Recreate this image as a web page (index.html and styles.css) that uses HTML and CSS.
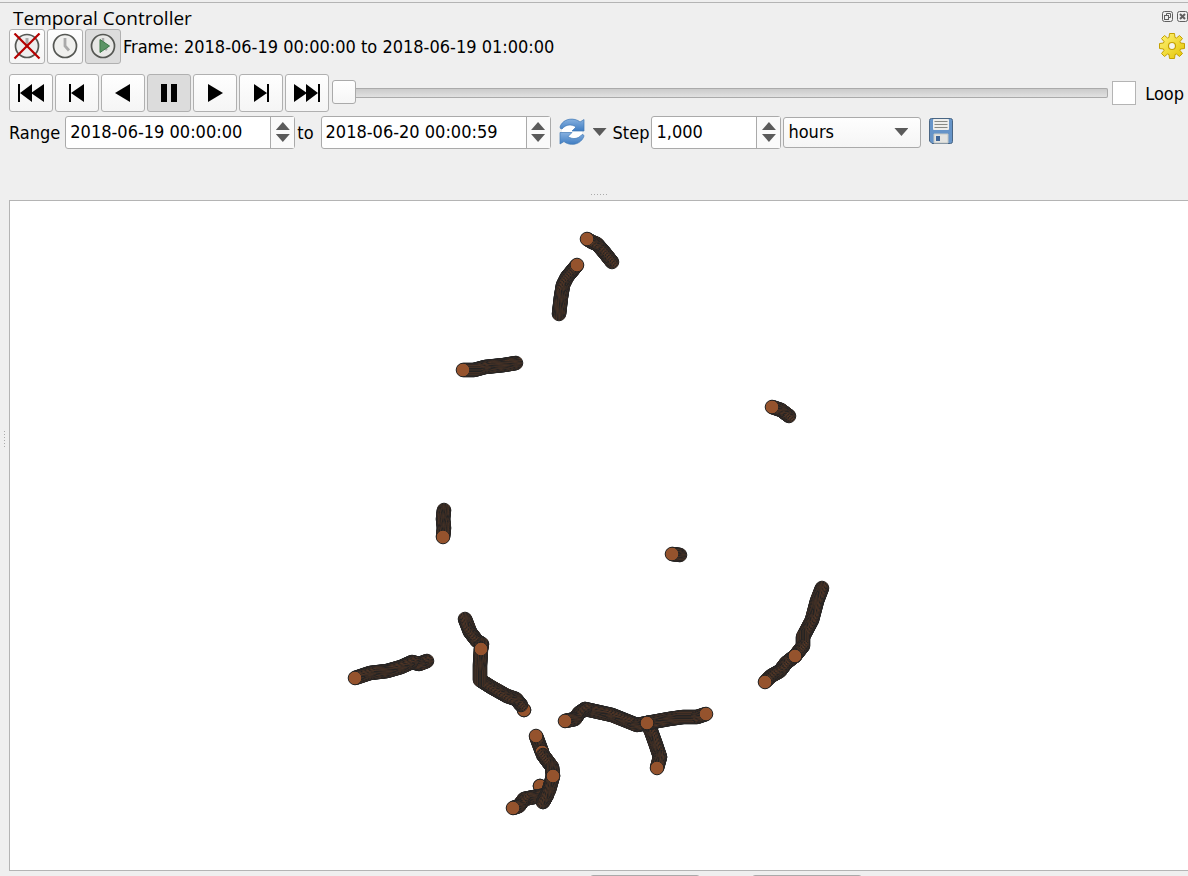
FILE: index.html
```
<!DOCTYPE html>
<html lang="en">

    <head>
        <meta charset="utf-8">
        <meta name="viewport" content="width=device-width, initial-scale=1">
        <title>Temporal Controller</title>

        <link rel="stylesheet" href="styles.css">
        <script src="tracks.js" defer></script>
    </head>

    <body>

        <section class="panel">

            <header class="title-bar">
                <h1>Temporal Controller</h1>
                <button class="dock-button" aria-label="Float">
                    <svg width="11" height="11" viewBox="0 0 11 11"><rect x=".5" y=".5" width="10" height="10" rx="2"/><path d="M4.500 4V2.500H8.500V6.500H7"/><rect x="2.500" y="4.500" width="4" height="4"/></svg>
                </button>
                <button class="dock-button" aria-label="Close">
                    <svg width="11" height="11" viewBox="0 0 11 11"><rect x=".5" y=".5" width="10" height="10" rx="2"/><path d="M3 3L8 8M8 3L3 8" stroke-width="2"/></svg>
                </button>
            </header>

            <div class="row mode-row">
                <button class="tool" aria-label="Turn off temporal navigation">
                    <svg width="28" height="28" viewBox="0 0 28 28">
                        <circle cx="14" cy="13" r="11.500" fill="#eee" stroke="#555753" stroke-width="1.700"/>
                        <path d="M14 5V13" stroke="#aaa" stroke-width="3"/>
                        <path d="M1.500 .5L26.500 25.500M26.500 .5L1.500 25.500" stroke="#b50000" stroke-width="2.200"/>
                    </svg>
                </button>
                <button class="tool" aria-label="Fixed range temporal navigation">
                    <svg width="28" height="28" viewBox="0 0 28 28">
                        <circle cx="14" cy="13" r="11.500" fill="#f0f0ee" stroke="#555753" stroke-width="1.700"/>
                        <path d="M14 5V13L18 17.500" fill="none" stroke="#aaa" stroke-width="2.800"/>
                    </svg>
                </button>
                <button class="tool active" aria-label="Animated temporal navigation">
                    <svg width="28" height="28" viewBox="0 0 28 28">
                        <circle cx="14" cy="13" r="11.500" fill="#e8e8e6" stroke="#555753" stroke-width="1.700"/>
                        <path d="M14 5V13L18 17" fill="none" stroke="#aaa" stroke-width="2.500"/>
                        <path d="M11 6.500V19.500L20.500 13Z" fill="#5c9465" stroke="#3c7847"/>
                    </svg>
                </button>
                <span>Frame: 2018-06-19 00:00:00 to 2018-06-19 01:00:00</span>
                <button class="icon-button settings" aria-label="Settings">
                    <svg width="28" height="28" viewBox="-14 -13 28 28">
                        <defs>
                            <linearGradient id="gold" x1="0" y1="0" x2="1" y2="1"><stop offset="0" stop-color="#fff47a"/><stop offset="1" stop-color="#e3c300"/></linearGradient>
                        </defs>
                        <path fill="url(#gold)" stroke="#c4a000" stroke-linejoin="round" d="M-2.500 -12.500H2.500L3 -8.500L4.500 -8L7.500 -10.500L10.500 -7.500L8 -4.500L8.500 -3L12.500 -2.500V2.500L8.500 3L8 4.500L10.500 7.500L7.500 10.500L4.500 8L3 8.500L2.500 12.500H-2.500L-3 8.500L-4.500 8L-7.500 10.500L-10.500 7.500L-8 4.500L-8.500 3L-12.500 2.500V-2.500L-8.500 -3L-8 -4.500L-10.500 -7.500L-7.500 -10.500L-4.500 -8L-3 -8.500Z"/>
                        <circle r="3.500" fill="#f4f4ee" stroke="#c4a000" stroke-width="1.200"/>
                    </svg>
                </button>
            </div>

            <div class="row play-row">
                <button class="play" aria-label="Rewind to start"><svg width="28" height="20" viewBox="0 0 28 20"><path d="M1 1h2v18H1zM3 10L15 1V19zM14 10L27 1V19z"/></svg></button>
                <button class="play" aria-label="Previous frame"><svg width="28" height="20" viewBox="0 0 28 20"><path d="M6 1h2v18H6zM8 10L21 1V19z"/></svg></button>
                <button class="play" aria-label="Play backwards"><svg width="28" height="20" viewBox="0 0 28 20"><path d="M6 10L21 1V19z"/></svg></button>
                <button class="play active" aria-label="Pause"><svg width="28" height="20" viewBox="0 0 28 20"><path d="M6 1h6v18H6zM16 1h6v18h-6z"/></svg></button>
                <button class="play" aria-label="Play"><svg width="28" height="20" viewBox="0 0 28 20"><path d="M22 10L7 1V19z"/></svg></button>
                <button class="play" aria-label="Next frame"><svg width="28" height="20" viewBox="0 0 28 20"><path d="M20 1h2v18h-2zM20 10L7 1V19z"/></svg></button>
                <button class="play" aria-label="Forward to end"><svg width="28" height="20" viewBox="0 0 28 20"><path d="M25 1h2v18h-2zM25 10L13 1V19zM14 10L1 1V19z"/></svg></button>
                <input class="timeline" type="range" min="0" max="24" value="0" aria-label="Frame">
                <input class="check" type="checkbox" id="loop">
                <label for="loop">Loop</label>
            </div>

            <div class="row range-row">
                <label class="range-label" for="range-start">Range</label>
                <div class="spin date">
                    <input id="range-start" type="text" value="2018-06-19 00:00:00">
                    <div class="steps"><button class="up" aria-label="Later start"></button><button class="down" aria-label="Earlier start"></button></div>
                </div>
                <label class="to" for="range-end">to</label>
                <div class="spin date">
                    <input id="range-end" type="text" value="2018-06-20 00:00:59">
                    <div class="steps"><button class="up" aria-label="Later end"></button><button class="down" aria-label="Earlier end"></button></div>
                </div>
                <button class="icon-button refresh" aria-label="Set to full range">
                    <svg width="26" height="28" viewBox="0 0 26 28">
                        <defs>
                            <linearGradient id="blue" x1="0" y1="0" x2="0" y2="1"><stop offset="0" stop-color="#86b0df"/><stop offset="1" stop-color="#3f7dc2"/></linearGradient>
                        </defs>
                        <path d="M3 9Q13 3 20 9L23 13V18Q13 24 5 18L3 14Z" fill="#fff"/>
                        <g fill="url(#blue)" stroke="#4078b5" stroke-width=".7" stroke-linejoin="round">
                            <path d="M1 9C3 3 9 0 16 1.500C18 2 20 3 21 4L25 1.500V13H13L17 9C13 6 7 6 3 11Q1 11 1 9Z"/>
                            <path d="M25 18C23 24 17 27.500 10 26C8 25.500 6 24.500 5 23.500L1 26V14.500H13L9 18.500C13 21.500 19 21.500 23 16.500Q25 16.500 25 18Z"/>
                        </g>
                    </svg>
                    <i class="arrow"></i>
                </button>
                <label for="step">Step</label>
                <div class="spin step">
                    <input id="step" type="text" value="1,000">
                    <div class="steps"><button class="up" aria-label="Increase step"></button><button class="down" aria-label="Decrease step"></button></div>
                </div>
                <div class="unit">
                    <select aria-label="Step unit">
                        <option>minutes</option>
                        <option selected>hours</option>
                        <option>days</option>
                    </select>
                    <i class="arrow"></i>
                </div>
                <button class="icon-button" aria-label="Export animation">
                    <svg width="24" height="28" viewBox="0 0 24 28">
                        <path d="M2.500 .5H21.500Q23.500 .5 23.500 2.500V23.500Q23.500 25.500 21.500 25.500H3L.5 23V2.500Q.5 .5 2.500 .5Z" fill="#6694c8" stroke="#4a6684"/>
                        <rect x="4" y="1" width="16" height="11" rx="1" fill="#eeeeec"/>
                        <path d="M5.500 3.500H18.500M5.500 6.500H18.500M5.500 9.500H18.500" stroke="#888a85"/>
                        <path d="M5 16H19V25H5Z" fill="#e4e4e1" stroke="#c5c8c4"/>
                        <rect x="7" y="18" width="4" height="5" fill="#3e6597"/>
                    </svg>
                </button>
            </div>

            <div class="grip" aria-hidden="true"><i></i><i></i><i></i><i></i><i></i><i></i></div>

        </section>

        <main class="workspace">
            <div class="grip vertical" aria-hidden="true"><i></i><i></i><i></i><i></i><i></i><i></i></div>
            <svg class="map" viewBox="10 201 1178 669" preserveAspectRatio="xMidYMid slice" role="img" aria-label="Map canvas">
                <g id="tracks"></g>
            </svg>
        </main>

        <footer class="status">
            <span class="status-box"></span>
            <span class="status-box"></span>
        </footer>

    </body>

</html>
```
FILE: styles.css
```
* {
    box-sizing: border-box;
}

body {
    margin: 0;
    height: 100vh;
    display: flex;
    flex-direction: column;
    overflow: hidden;
    background: #efefef;
    color: #000;
    font: 18px/22px "DejaVu Sans Condensed", "DejaVu Sans", sans-serif;
}

button, input, select {
    margin: 0;
    font: inherit;
    color: inherit;
}

svg {
    display: block;
}

.panel {
    flex: none;
    margin-top: 2px;
    padding: 4px 0 5px 9px;
    border-top: 1px solid #b4b4b4;
}

.title-bar {
    display: flex;
    align-items: center;
    gap: 4px;
    height: 22px;
    padding-left: 4px;
}

.title-bar h1 {
    flex: 1;
    margin: 0;
    font: 19px/24px "Open Sans", sans-serif;
}

.dock-button {
    padding: 0 0 3px;
    border: 0;
    background: none;
}

.dock-button svg {
    fill: none;
    stroke: #606060;
}

.row {
    display: flex;
    align-items: center;
}

.row > span, .row > label {
    padding-top: 1px;
}

.mode-row {
    gap: 2px;
}

.tool, .play {
    display: flex;
    align-items: center;
    justify-content: center;
    flex: none;
    padding: 0;
    border: 1px solid #b0b0b0;
    border-radius: 3px;
    background: linear-gradient(#fefefe, #f5f5f5);
}

.tool {
    width: 36px;
    height: 35px;
}

.play {
    width: 44px;
    height: 38px;
}

.active {
    background: #dcdcdc;
}

.icon-button {
    display: flex;
    align-items: center;
    padding: 0;
    border: 0;
    background: none;
}

.settings {
    margin-left: auto;
    margin-right: 2px;
}

.play-row {
    gap: 2px;
    margin-top: 10px;
    padding-right: 4px;
}

.timeline {
    flex: 1;
    min-width: 0;
    height: 24px;
    margin: 0 2px 0 1px;
    appearance: none;
    background: none;
}

.timeline::-webkit-slider-runnable-track {
    height: 10px;
    border-radius: 2px;
    background: linear-gradient(#c8c8c8, #e4e4e4);
    box-shadow: inset 0 0 0 1px #aaa;
}

.timeline::-webkit-slider-thumb {
    appearance: none;
    width: 24px;
    height: 24px;
    margin-top: -8px;
    border: 1px solid #aaa;
    border-radius: 3px;
    background: linear-gradient(#fff, #f6f6f6);
}

.check {
    appearance: none;
    width: 24px;
    height: 24px;
    margin-right: 7px;
    border: 1px solid #b4b4b4;
    background: #fff;
}

.check:checked {
    background: #555;
    box-shadow: inset 0 0 0 5px #fff;
}

.range-row {
    gap: 2px;
    height: 34px;
    margin-top: 3px;
}

.range-label {
    margin-right: 3px;
}

.spin {
    display: flex;
    height: 33px;
    border: 1px solid #aaa;
    border-radius: 3px;
    background: #fff;
}

.spin input {
    flex: 1;
    min-width: 0;
    padding: 0 4px;
    border: 0;
    background: none;
}

.date {
    width: 230px;
}

.step {
    width: 130px;
}

.to {
    margin-right: 5px;
}

.steps {
    display: flex;
    flex-direction: column;
    width: 24px;
    border-left: 1px solid #aaa;
    background: #fafafa;
}

.steps button {
    display: flex;
    flex: 1;
    justify-content: center;
    align-items: flex-end;
    padding: 2px 0;
    border: 0;
    background: none;
}

.steps .down {
    align-items: flex-start;
}

.steps button::before, .arrow {
    content: "";
    width: 14px;
    height: 8px;
    background: #5a5a5a;
    clip-path: polygon(0 0, 100% 0, 50% 100%);
}

.steps .up::before {
    clip-path: polygon(50% 0, 100% 100%, 0 100%);
}

.refresh {
    gap: 8px;
    margin: 0 4px 0 6px;
}

.unit {
    display: grid;
    align-items: center;
    width: 138px;
    margin-right: 6px;
}

.unit select, .unit .arrow {
    grid-area: 1 / 1;
}

.unit select {
    appearance: none;
    height: 31px;
    padding: 0 4px;
    border: 1px solid #aaa;
    border-radius: 3px;
    background: linear-gradient(#fefefe, #f5f5f5);
}

.unit .arrow {
    justify-self: end;
    margin-right: 13px;
    pointer-events: none;
}

/* splitter handles */
.grip {
    display: flex;
    justify-content: center;
    gap: 2px;
    margin-top: 45px;
}

.grip i {
    width: 1px;
    height: 1px;
    background: #aaa;
}

.vertical {
    flex-direction: column;
    align-items: center;
    width: 9px;
    margin: 0;
    padding-bottom: 194px;
}

.workspace {
    display: flex;
    flex: 1;
    min-height: 0;
}

.map {
    flex: 1;
    min-width: 0;
    height: 100%;
    border: solid #b4b4b4;
    border-width: 1px 0 1px 1px;
    background: #fff;
}

.status {
    display: flex;
    flex: none;
    justify-content: flex-end;
    gap: 52px;
    height: 5px;
    padding: 4px 326px 0 0;
}

.status-box {
    width: 110px;
    height: 24px;
    border: 1px solid #aaa;
    border-radius: 3px;
}
```
FILE: tracks.js
```
// each track is a run of positions, the last one is drawn on top
const tracks = [
    [[612, 262], [604, 252], [597, 244], [592, 242], [587, 239]],
    [[559, 314], [561, 297], [563, 285], [567, 277], [577, 265]],
    [[516, 363], [504, 365], [485, 367], [474, 370], [463, 370]],
    [[789, 416], [781, 410], [772, 407]],
    [[444, 510], [443, 519], [444, 528], [443, 537]],
    [[680, 555], [672, 554]],
    [[427, 661], [419, 664], [412, 662], [401, 667], [387, 671], [370, 673], [355, 678]],
    [[524, 710], [524, 710]],
    [[465, 619], [470, 632], [477, 641], [482, 644], [481, 649]],
    [[521, 705], [516, 699], [507, 696], [491, 687], [480, 680], [480, 665], [481, 649]],
    [[585, 709], [612, 715], [637, 725], [647, 723]],
    [[585, 709], [579, 713], [575, 719], [565, 721]],
    [[660, 757], [656, 745], [651, 731], [647, 723]],
    [[660, 757], [657, 768]],
    [[647, 723], [669, 719], [683, 717], [697, 717], [706, 714]],
    [[647, 723], [647, 723]],
    [[542, 752], [536, 736]],
    [[542, 752], [542, 752]],
    [[540, 786], [540, 786]],
    [[543, 755], [552, 767], [553, 776]],
    [[543, 802], [547, 795], [534, 797], [524, 799], [519, 806], [513, 808]],
    [[543, 802], [549, 790], [553, 776]],
    [[822, 588], [817, 601], [812, 620], [803, 637], [803, 646], [795, 656]],
    [[795, 656], [786, 663], [780, 671], [771, 676], [765, 682]],
    [[795, 656], [795, 656]],
];

const layer = document.getElementById("tracks");

function add_point(x, y) {
    const point = document.createElementNS("http://www.w3.org/2000/svg", "circle");
    point.setAttribute("cx", x);
    point.setAttribute("cy", y);
    point.setAttribute("r", 6.8);
    point.setAttribute("fill", "#95532d");
    point.setAttribute("stroke", "#232323");
    point.setAttribute("stroke-width", 1);
    layer.appendChild(point);
}

for (const track of tracks) {
    for (let i = 1; i < track.length; i++) {
        const [x1, y1] = track[i - 1];
        const [x2, y2] = track[i];
        const steps = Math.max(1, Math.ceil(Math.hypot(x2 - x1, y2 - y1)));
        for (let s = 0; s < steps; s++) {
            add_point(x1 + (x2 - x1) * s / steps, y1 + (y2 - y1) * s / steps);
        }
    }
    add_point(...track[track.length - 1]);
}
```
